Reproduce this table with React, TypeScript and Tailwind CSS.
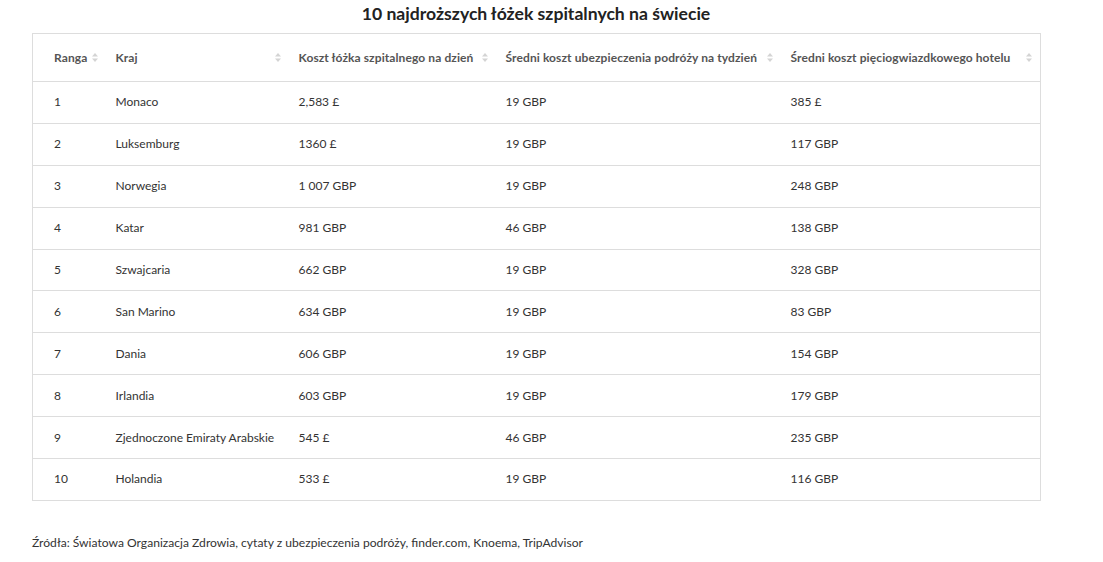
import React from "react";

const rows = [
  ["1", "Monaco", "2,583 £", "19 GBP", "385 £"],
  ["2", "Luksemburg", "1360 £", "19 GBP", "117 GBP"],
  ["3", "Norwegia", "1 007 GBP", "19 GBP", "248 GBP"],
  ["4", "Katar", "981 GBP", "46 GBP", "138 GBP"],
  ["5", "Szwajcaria", "662 GBP", "19 GBP", "328 GBP"],
  ["6", "San Marino", "634 GBP", "19 GBP", "83 GBP"],
  ["7", "Dania", "606 GBP", "19 GBP", "154 GBP"],
  ["8", "Irlandia", "603 GBP", "19 GBP", "179 GBP"],
  ["9", "Zjednoczone Emiraty Arabskie", "545 £", "46 GBP", "235 GBP"],
  ["10", "Holandia", "533 £", "19 GBP", "116 GBP"],
];

const headers = [
  "Ranga",
  "Kraj",
  "Koszt łóżka szpitalnego na dzień",
  "Średni koszt ubezpieczenia podróży na tydzień",
  "Średni koszt pięciogwiazdkowego hotelu",
];

function SortIcon() {
  return (
    <svg width="6" height="9" viewBox="0 0 6 9" className="shrink-0">
      <path d="M3 0 L6 3.5 L0 3.5 Z" fill="#d4d4d4" />
      <path d="M3 9 L6 5.5 L0 5.5 Z" fill="#d4d4d4" />
    </svg>
  );
}

export default function App() {
  const font = { fontFamily: "Lato, 'Noto Sans', sans-serif" };
  return (
    <div className="w-[1103px] h-[562px] bg-white" style={font}>
      <div className="ml-[32px] w-[1008px]">
        <h1 className="h-[33px] pt-[3px] text-center text-[17.6px] font-bold text-[#222] leading-[22px]">
          10 najdroższych łóżek szpitalnych na świecie
        </h1>
        <table className="w-[1008px] table-fixed border-collapse border border-[#dddddd] text-[12px] text-[#333]">
          <colgroup>
            <col className="w-[73px]" />
            <col className="w-[183px]" />
            <col className="w-[207px]" />
            <col className="w-[285px]" />
            <col className="w-[260px]" />
          </colgroup>
          <thead>
            <tr className="h-[48px] border-b border-[#dddddd]">
              {headers.map((h, i) => (
                <th
                  key={i}
                  className={`${i === 0 ? "pl-[21px]" : "pl-[10px]"} pr-[8px] text-left font-bold text-[#555] tracking-[0.1px]`}
                >
                  <div className="flex items-center justify-between gap-1">
                    <span className="whitespace-nowrap">{h}</span>
                    <SortIcon />
                  </div>
                </th>
              ))}
            </tr>
          </thead>
          <tbody>
            {rows.map((r, ri) => (
              <tr key={ri} className="h-[41.9px] border-b border-[#dddddd]">
                {r.map((c, ci) => (
                  <td
                    key={ci}
                    className={`${ci === 0 ? "pl-[21px]" : "pl-[10px]"} whitespace-nowrap`}
                  >
                    {c}
                  </td>
                ))}
              </tr>
            ))}
          </tbody>
        </table>
        <p className="mt-[33px] text-[12.1px] text-[#333]">
          Źródła: Światowa Organizacja Zdrowia, cytaty z ubezpieczenia podróży, finder.com, Knoema, TripAdvisor
        </p>
      </div>
    </div>
  );
}
